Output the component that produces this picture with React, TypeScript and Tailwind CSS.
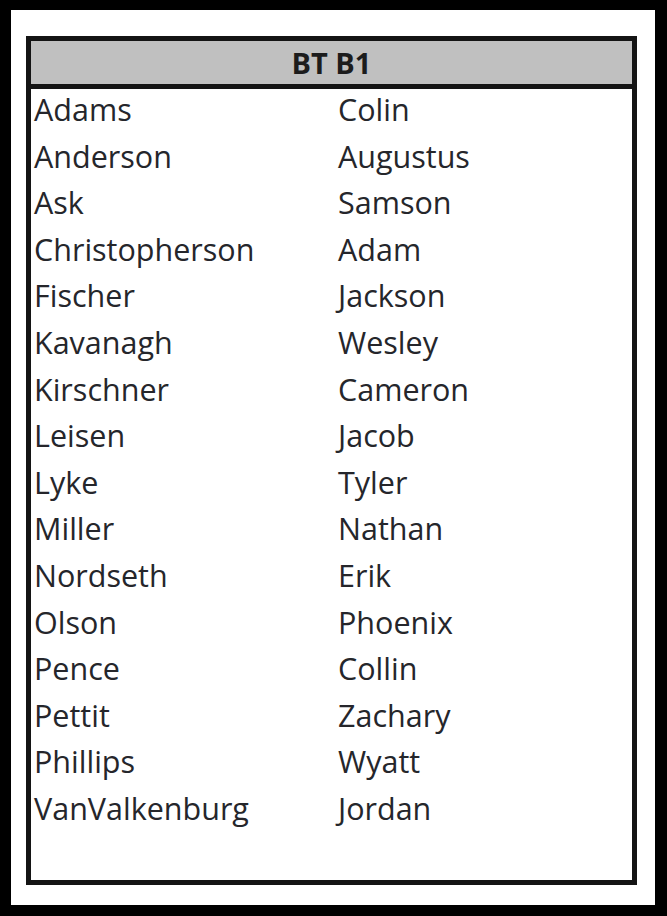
const ROWS: [string, string][] = [
  ["Adams", "Colin"],
  ["Anderson", "Augustus"],
  ["Ask", "Samson"],
  ["Christopherson", "Adam"],
  ["Fischer", "Jackson"],
  ["Kavanagh", "Wesley"],
  ["Kirschner", "Cameron"],
  ["Leisen", "Jacob"],
  ["Lyke", "Tyler"],
  ["Miller", "Nathan"],
  ["Nordseth", "Erik"],
  ["Olson", "Phoenix"],
  ["Pence", "Collin"],
  ["Pettit", "Zachary"],
  ["Phillips", "Wyatt"],
  ["VanValkenburg", "Jordan"],
];

export default function App() {
  return (
    <div className="w-[667px] h-[916px] bg-black pt-[10px] pl-[11px] pr-[12px] pb-[11px]">
      <div className="h-full bg-white pt-[26px] pl-[15px] pr-[18px] pb-[20px]">
        <div
          className="h-full border-[5px] border-[#141414] flex flex-col text-[#25262b]"
          style={{ fontFamily: '"Open Sans", "Liberation Sans", sans-serif' }}
        >
          {/* Header */}
          <div className="h-[48px] shrink-0 bg-[#c0c0c0] border-b-[5px] border-[#141414] flex items-center justify-center">
            <span className="text-[29px] font-bold text-[#1c1c1c] leading-none">BT B1</span>
          </div>

          {/* Names */}
          <div className="-mt-[3px] pl-[3px]">
            {ROWS.map(([last, first]) => (
              <div
                key={last}
                className="grid grid-cols-[304px_1fr] text-[30.5px] font-medium leading-[46.6px]"
              >
                <span>{last}</span>
                <span>{first}</span>
              </div>
            ))}
          </div>
        </div>
      </div>
    </div>
  );
}
